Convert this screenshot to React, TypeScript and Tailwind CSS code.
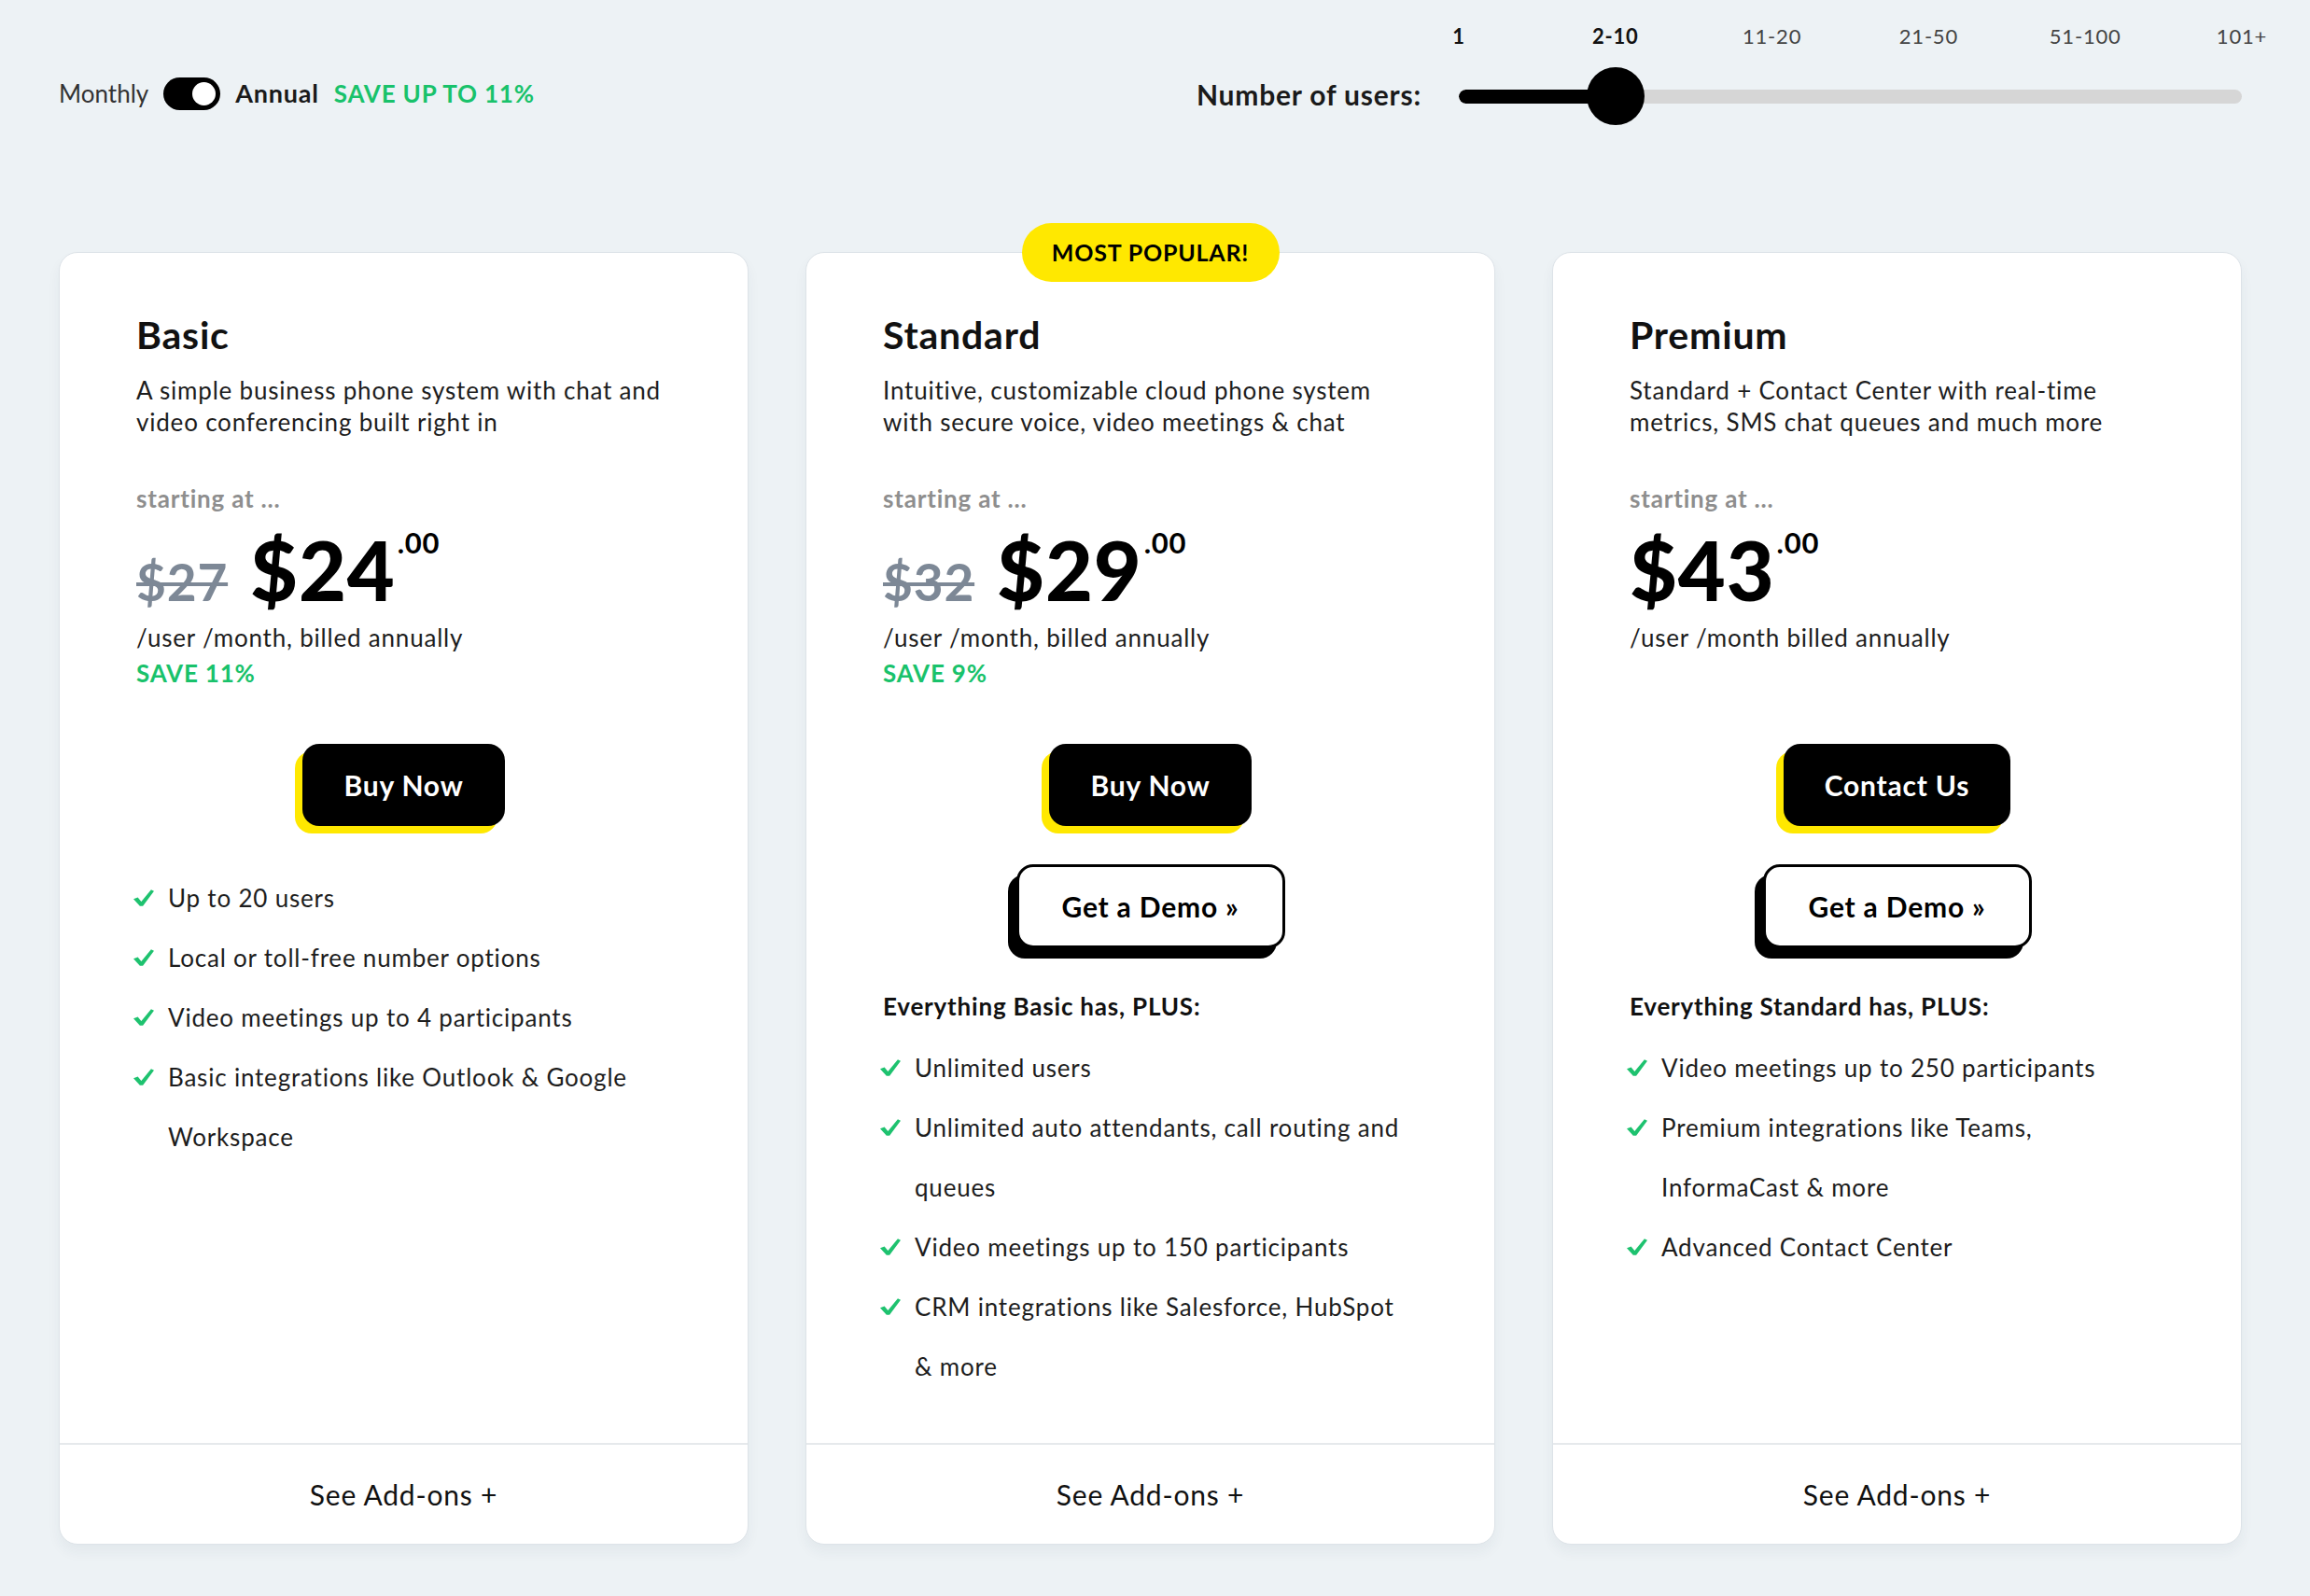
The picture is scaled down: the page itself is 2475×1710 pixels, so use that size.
import React, { useState } from 'react';

type Plan = {
  name: string;
  desc: string;
  oldPrice?: string;
  price: string;
  billing: string;
  save?: string;
  cta: string;
  demo: boolean;
  popular?: boolean;
  header?: string;
  features: string[];
};

const plans: Plan[] = [
  {
    name: 'Basic',
    desc: 'A simple business phone system with chat and video conferencing built right in',
    oldPrice: '$27',
    price: '$24',
    billing: '/user /month, billed annually',
    save: 'SAVE 11%',
    cta: 'Buy Now',
    demo: false,
    features: [
      'Up to 20 users',
      'Local or toll-free number options',
      'Video meetings up to 4 participants',
      'Basic integrations like Outlook & Google Workspace',
    ],
  },
  {
    name: 'Standard',
    desc: 'Intuitive, customizable cloud phone system with secure voice, video meetings & chat',
    oldPrice: '$32',
    price: '$29',
    billing: '/user /month, billed annually',
    save: 'SAVE 9%',
    cta: 'Buy Now',
    demo: true,
    popular: true,
    header: 'Everything Basic has, PLUS:',
    features: [
      'Unlimited users',
      'Unlimited auto attendants, call routing and queues',
      'Video meetings up to 150 participants',
      'CRM integrations like Salesforce, HubSpot & more',
    ],
  },
  {
    name: 'Premium',
    desc: 'Standard + Contact Center with real-time metrics, SMS chat queues and much more',
    price: '$43',
    billing: '/user /month billed annually',
    cta: 'Contact Us',
    demo: true,
    header: 'Everything Standard has, PLUS:',
    features: [
      'Video meetings up to 250 participants',
      'Premium integrations like Teams, InformaCast & more',
      'Advanced Contact Center',
    ],
  },
];

const steps = ['1', '2-10', '11-20', '21-50', '51-100', '101+'];

function Check() {
  return (
    <svg width="22" height="18" viewBox="0 0 20 16" className="shrink-0">
      <path d="M0 9.2 L4.2 7.6 L7.6 11.6 L17.2 0 L20 1.4 L9.2 16 L6.2 16 Z" fill="#1ec26f" />
    </svg>
  );
}

function UserSlider() {
  const [active] = useState(1);
  const pct = (active / (steps.length - 1)) * 100;

  return (
    <div className="flex flex-col w-[839px]">
      <div className="flex justify-between h-[30px] items-center">
        {steps.map((s, i) => (
          <div key={s} className="w-0 flex justify-center">
            <span
              className={
                i <= active
                  ? 'text-[22px] font-bold text-[#111] whitespace-nowrap'
                  : 'text-[22px] text-[#444] whitespace-nowrap'
              }
            >
              {s}
            </span>
          </div>
        ))}
      </div>
      <div className="relative mt-[19px] h-[62px] flex items-center">
        <div className="w-full h-[15px] rounded-full bg-[#d6d6d6] overflow-hidden">
          <div className="h-full bg-black rounded-full" style={{ width: `${pct}%` }} />
        </div>
        <div
          className="absolute top-0 w-[62px] h-[62px] rounded-full bg-black -translate-x-1/2"
          style={{ left: `${pct}%` }}
        />
      </div>
    </div>
  );
}

function PlanCard({ plan }: { plan: Plan }) {
  return (
    <div className="relative flex flex-col bg-white rounded-[20px] border border-[#dde3e8] shadow-[0_8px_14px_rgba(40,60,80,0.05)]">
      {plan.popular && (
        <div className="absolute left-1/2 -translate-x-1/2 -top-[32px] w-[276px] h-[63px] rounded-full bg-[#ffe800] flex items-center justify-center">
          <span className="text-[25px] font-bold text-black">MOST POPULAR!</span>
        </div>
      )}

      <div className="flex-1 px-[82px] pt-[64px] pb-[50px]">
        <h2 className="text-[41px] leading-[48px] font-bold text-[#111]">{plan.name}</h2>
        <p className="mt-[18px] text-[26px] leading-[34px] text-[#1d1d1d]">{plan.desc}</p>

        <div className="mt-[49px] text-[26px] leading-[32px] font-bold text-[#8e8e8e]">starting at ...</div>

        <div className="mt-[16px] flex items-baseline">
          {plan.oldPrice && (
            <span className="mr-[24px] text-[55px] leading-none font-bold text-[#7d8896] line-through decoration-4">
              {plan.oldPrice}
            </span>
          )}
          <span className="text-[88px] leading-none font-black text-black">
            {plan.price}
            <span className="ml-[2px] align-top text-[31px] leading-none font-bold">.00</span>
          </span>
        </div>

        <div className="mt-[12px] text-[26px] leading-[34px] text-[#1d1d1d]">{plan.billing}</div>
        <div className="mt-[6px] h-[30px] text-[26px] leading-[30px] font-bold text-[#19c26b]">
          {plan.save}
        </div>

        <div className="mt-[61px] flex flex-col items-center">
          <button className="h-[88px] px-[44px] rounded-[18px] bg-black text-white text-[30px] font-bold shadow-[-8px_8px_0_#ffe800]">
            {plan.cta}
          </button>
          {plan.demo && (
            <button className="mt-[41px] h-[90px] w-[288px] rounded-[18px] bg-white border-[3px] border-black text-black text-[30px] font-bold shadow-[-9px_11px_0_#000]">
              Get a Demo »
            </button>
          )}
        </div>

        {plan.header ? (
          <div className="mt-[30px] mb-[2px] text-[26px] leading-[64px] font-bold text-[#111]">{plan.header}</div>
        ) : (
          <div className="h-[45px]" />
        )}

        <ul className="flex flex-col">
          {plan.features.map((f) => (
            <li key={f} className="flex gap-[15px] -ml-[3px]">
              <div className="h-[64px] flex items-center">
                <Check />
              </div>
              <span className="text-[26px] leading-[64px] text-[#1d1d1d]">{f}</span>
            </li>
          ))}
        </ul>
      </div>

      <div className="h-[108px] border-t-2 border-[#e6e9ec] flex items-center justify-center">
        <span className="text-[30px] text-[#111]">See Add-ons +</span>
      </div>
    </div>
  );
}

export default function App() {
  return (
    <div className="min-h-screen bg-[#edf2f5] font-['Lato',sans-serif] tracking-[0.8px] pb-[57px]">
      <div className="w-[2339px] ml-[63px]">
        {/* Top controls */}
        <div className="flex justify-between items-start pt-[23px]">
          <div className="mt-[60px] h-[35px] flex items-center gap-4">
            <span className="text-[26px] tracking-normal text-[#333]">Monthly</span>
            <div className="w-[61px] h-[35px] rounded-full bg-black flex items-center justify-end pr-[5px]">
              <div className="w-[25px] h-[25px] rounded-full bg-white" />
            </div>
            <span className="text-[27px] font-bold text-[#1a1a1a]">Annual</span>
            <span className="text-[26px] font-bold text-[#19c26b]">SAVE UP TO 11%</span>
          </div>

          <div className="flex items-end gap-[40px]">
            <span className="mb-[17px] text-[30px] leading-[32px] font-bold text-[#1a1a1a]">Number of users:</span>
            <UserSlider />
          </div>
        </div>

        {/* Plans */}
        <div className="mt-[136px] grid grid-cols-3 gap-[61px]">
          {plans.map((p) => (
            <PlanCard key={p.name} plan={p} />
          ))}
        </div>
      </div>
    </div>
  );
}
